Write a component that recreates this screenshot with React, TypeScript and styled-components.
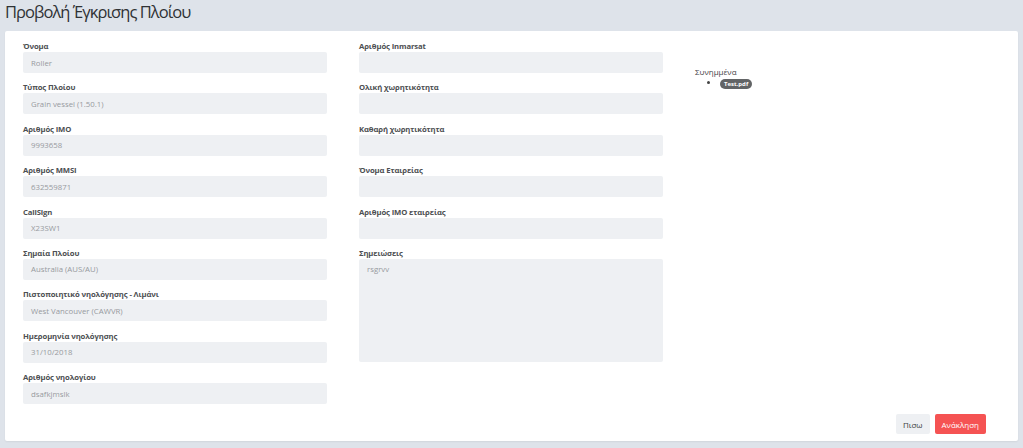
import styled, { createGlobalStyle } from "styled-components";

const GlobalStyle = createGlobalStyle`
  html, body {
    margin: 0;
    padding: 0;
    background: #dee3ea;
    font-family: "Open Sans", "Noto Sans", sans-serif;
  }
  * { box-sizing: border-box; }
`;

type Field = { label: string; value?: string; tall?: boolean };

const leftFields: Field[] = [
  { label: "Όνομα", value: "Roller" },
  { label: "Τύπος Πλοίου", value: "Grain vessel (1.50.1)" },
  { label: "Αριθμός IMO", value: "9993658" },
  { label: "Αριθμός MMSI", value: "632559871" },
  { label: "CallSign", value: "X23SW1" },
  { label: "Σημαία Πλοίου", value: "Australia (AUS/AU)" },
  { label: "Πιστοποιητικό νηολόγησης - Λιμάνι", value: "West Vancouver (CAWVR)" },
  { label: "Ημερομηνία νηολόγησης", value: "31/10/2018" },
  { label: "Αριθμός νηολογίου", value: "dsafkjmslk" },
];

const middleFields: Field[] = [
  { label: "Αριθμός Inmarsat" },
  { label: "Ολική χωρητικότητα" },
  { label: "Καθαρή χωρητικότητα" },
  { label: "Όνομα Εταιρείας" },
  { label: "Αριθμός IMO εταιρείας" },
  { label: "Σημειώσεις", value: "rsgrvv", tall: true },
];

export default function App() {
  return (
    <>
      <GlobalStyle />
      <Page>
        <Title>Προβολή Έγκρισης Πλοίου</Title>
        <Card>
          <Columns>
            <Column>
              {leftFields.map((f) => (
                <FormGroup key={f.label}>
                  <Label>{f.label}</Label>
                  <Input>{f.value}</Input>
                </FormGroup>
              ))}
            </Column>
            <Column>
              {middleFields.map((f) => (
                <FormGroup key={f.label}>
                  <Label>{f.label}</Label>
                  <Input $tall={f.tall}>{f.value}</Input>
                </FormGroup>
              ))}
            </Column>
            <Attachments>
              <AttachTitle>Συνημμένα</AttachTitle>
              <FileList>
                <li>
                  <FileBadge>Test.pdf</FileBadge>
                </li>
              </FileList>
            </Attachments>
          </Columns>
          <Footer>
            <Button>Πισω</Button>
            <Button $danger>Ανάκληση</Button>
          </Footer>
        </Card>
      </Page>
    </>
  );
}

const Page = styled.div`
  width: 1023px;
  height: 448px;
  padding: 0 5px 7px 5px;
  display: flex;
  flex-direction: column;
`;

const Title = styled.h1`
  margin: 0;
  height: 31px;
  font-size: 16.5px;
  font-weight: 400;
  letter-spacing: -0.95px;
  color: #2f3235;
  line-height: 24px;
`;

const Card = styled.div`
  flex: 1;
  background: #fff;
  border-radius: 2px;
  box-shadow: 0 1px 2px rgba(0, 0, 0, 0.06);
  padding: 9px 32px 7px 18px;
  display: flex;
  flex-direction: column;
`;

const Columns = styled.div`
  flex: 1;
  display: grid;
  grid-template-columns: 304px 304px 1fr;
  column-gap: 32px;
`;

const Column = styled.div`
  display: flex;
  flex-direction: column;
`;

const FormGroup = styled.div`
  display: flex;
  flex-direction: column;
  margin-bottom: 8.4px;
`;

const Label = styled.div`
  font-size: 7.7px;
  font-weight: 700;
  letter-spacing: -0.12px;
  color: #4d4f52;
  line-height: 12px;
`;

const Input = styled.div<{ $tall?: boolean }>`
  height: ${(p) => (p.$tall ? "103px" : "21px")};
  background: #eef0f3;
  border-radius: 2px;
  padding: ${(p) => (p.$tall ? "5px 8px" : "0 8px")};
  display: flex;
  align-items: ${(p) => (p.$tall ? "flex-start" : "center")};
  font-size: 7.8px;
  color: #979a9e;
`;

const Attachments = styled.div`
  padding-top: 26px;
`;

const AttachTitle = styled.div`
  font-size: 8px;
  color: #3f4245;
  line-height: 11px;
`;

const FileList = styled.ul`
  margin: 0;
  padding-left: 25px;
  font-size: 8px;
  color: #444;
  line-height: 11px;
`;

const FileBadge = styled.span`
  display: inline-block;
  background: #626466;
  color: #fff;
  font-size: 6px;
  font-weight: 700;
  line-height: 10px;
  padding: 0 4px;
  border-radius: 5px;
`;

const Footer = styled.div`
  display: flex;
  justify-content: flex-end;
  gap: 5px;
`;

const Button = styled.div<{ $danger?: boolean }>`
  height: 20px;
  padding: 0 7px;
  display: flex;
  align-items: center;
  border-radius: 2px;
  font-size: 8px;
  background: ${(p) => (p.$danger ? "#f55353" : "#eef0f3")};
  color: ${(p) => (p.$danger ? "#fff" : "#3a3d40")};
`;
